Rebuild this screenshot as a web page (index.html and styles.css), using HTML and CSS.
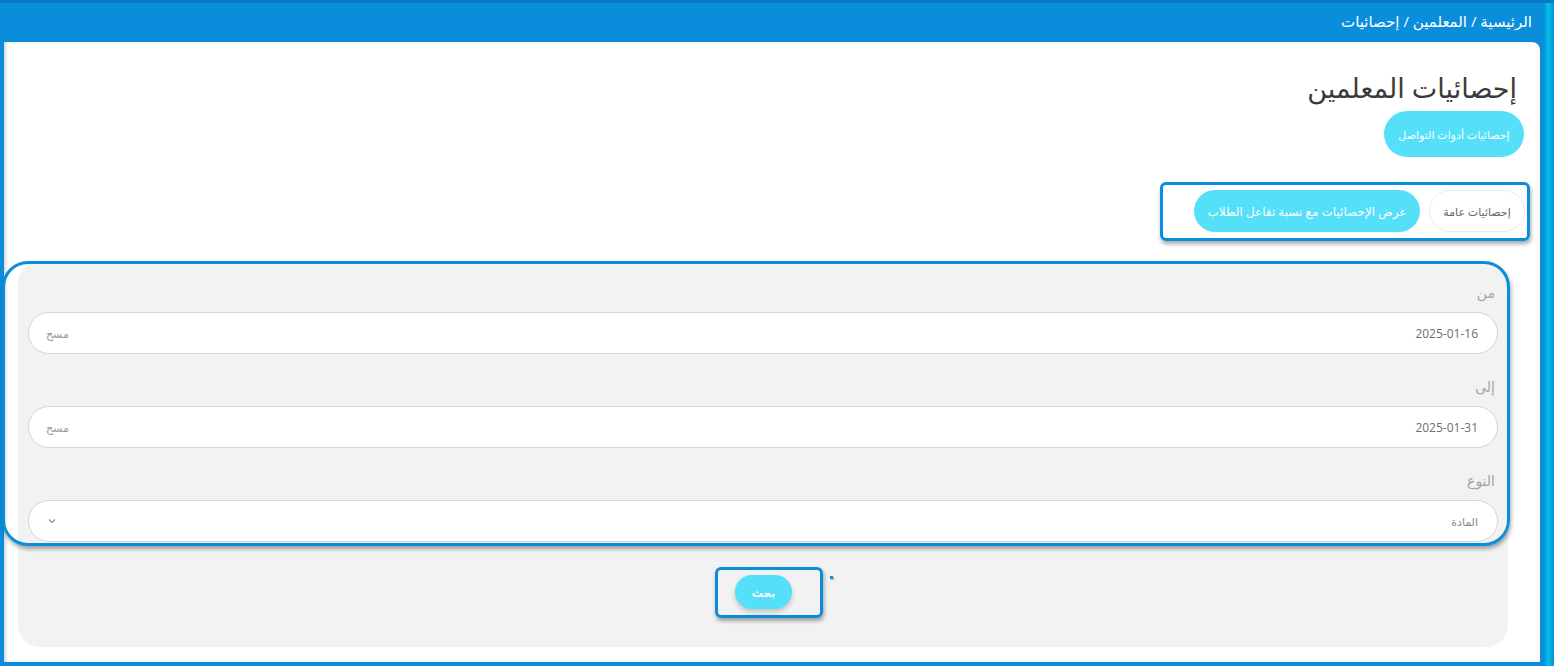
FILE: index.html
```html
<!DOCTYPE html>
<html lang="ar" dir="rtl">
<head>
    <meta charset="utf-8">
    <title>إحصائيات المعلمين</title>
    <link rel="stylesheet" href="styles.css">
</head>
<body>
    <div class="topbar">
        <div class="breadcrumb">الرئيسية / المعلمين / إحصائيات</div>
    </div>
    <div class="main">
        <h2 class="page-title">إحصائيات المعلمين</h2>
        <button class="pill cyan social-btn">إحصائيات أدوات التواصل</button>

        <div class="tabs focus-box">
            <button class="pill plain">إحصائيات عامة</button>
            <button class="pill cyan wide">عرض الإحصائيات مع نسبة تفاعل الطلاب</button>
        </div>

        <div class="card">
            <div class="filters focus-box">
                <div class="field">
                    <label>من</label>
                    <div class="input-box">
                        <span class="value">2025-01-16</span>
                        <span class="clear">مسح</span>
                    </div>
                </div>
                <div class="field">
                    <label>إلى</label>
                    <div class="input-box">
                        <span class="value">2025-01-31</span>
                        <span class="clear">مسح</span>
                    </div>
                </div>
                <div class="field last">
                    <label>النوع</label>
                    <div class="input-box">
                        <span class="option">المادة</span>
                        <svg class="chevron" width="8" height="6" viewBox="0 0 8 6"><path d="M1 1.5 L4 4.5 L7 1.5" fill="none" stroke="#8a8a8a" stroke-width="1.1"/></svg>
                    </div>
                </div>
            </div>

            <div class="search-row">
                <div class="search-box focus-box">
                    <button class="pill cyan search-btn">بحث</button>
                    <span class="dot"></span>
                </div>
            </div>
        </div>
    </div>
</body>
</html>
```

FILE: styles.css
```css
html, body {
    margin: 0;
    height: 666px;
    overflow: hidden;
}
body {
    font-family: "Open Sans", "DejaVu Sans", sans-serif;
    background: linear-gradient(90deg, #0a8ddb calc(100% - 10px), #00c4ea calc(100% - 6px), #0a8ddb 100%);
    border-top: 3px solid #0679c2;
    box-sizing: border-box;
}
.topbar {
    height: 39px;
    padding-right: 22px;
    display: flex;
    align-items: center;
}
.breadcrumb {
    color: #fff;
    font-size: 15px;
    margin-top: -3px;
}
.main {
    background: #fff;
    margin-left: 4px;
    margin-right: 14px;
    height: 620px;
    border-top-right-radius: 8px;
    padding-top: 26px;
    padding-right: 16px;
    box-sizing: border-box;
    box-shadow: 2px 0 3px rgba(0,0,0,.15) inset;
}
.page-title {
    margin: 0 7px 0 0;
    font-size: 27px;
    font-weight: normal;
    line-height: 40px;
    color: #3a3a3a;
}
.pill {
    border: none;
    border-radius: 24px;
    font-family: "Open Sans", "DejaVu Sans", sans-serif;
    white-space: nowrap;
    padding: 0;
    cursor: pointer;
}
.cyan {
    background-color: #55dff8;
    color: #fff;
    font-size: 11px;
}
.social-btn {
    display: block;
    margin-top: 3px;
    width: 140px;
    height: 46px;
}
.focus-box {
    border: 3px solid #0a8ddb;
    box-shadow: 1px 3px 4px rgba(0,0,0,.35);
}
.tabs {
    display: flex;
    gap: 9px;
    width: 370px;
    margin-top: 25px;
    margin-right: -6px;
    padding: 5px 2px 6px 0;
    box-sizing: border-box;
    border-radius: 6px;
}
.tabs .pill {
    height: 42px;
    border-radius: 21px;
}
.plain {
    width: 96px;
    background: #fff;
    border: 1px solid #ececec !important;
    color: #666;
    font-size: 11px;
}
.wide {
    width: 226px;
    font-size: 12px;
}
.card {
    background: #f2f2f2;
    margin: 21px 16px 0 14px;
    border-radius: 22px;
    height: 386px;
    padding-bottom: 30px;
    box-sizing: border-box;
}
.filters {
    margin: -1px -2px 0 -16px;
    padding: 19px 9px 1px 23px;
    border-radius: 26px;
}
.field {
    margin-bottom: 23px;
}
.field.last {
    margin-bottom: 0;
}
.field label {
    display: block;
    font-size: 14px;
    line-height: 20px;
    color: #aaa39c;
    padding-right: 3px;
    margin-bottom: 9px;
}
.input-box {
    height: 42px;
    background: #fff;
    border: 1px solid #d5d5d5;
    border-radius: 21px;
    box-sizing: border-box;
    display: flex;
    align-items: center;
    justify-content: space-between;
    padding: 0 19px 0 17px;
}
.value {
    font-size: 12px;
    color: #6e6e6e;
}
.clear {
    font-size: 11px;
    color: #999;
}
.option {
    font-size: 11px;
    color: #8a8a8a;
}
.chevron {
    margin-left: 2px;
}
.search-row {
    display: flex;
    justify-content: center;
    margin-top: 21px;
}
.search-box {
    position: relative;
    margin-left: 12px;
    padding: 5px 28px 6px 17px;
    border-radius: 6px;
}
.search-btn {
    display: block;
    width: 57px;
    height: 34px;
    border-radius: 17px;
    font-weight: bold;
    box-shadow: 0 3px 5px rgba(0,0,0,.2);
}
.dot {
    position: absolute;
    right: -13px;
    top: 6px;
    width: 3px;
    height: 3px;
    background: #0a8ddb;
    box-shadow: 1px 1px 2px rgba(0,0,0,.3);
}
```
